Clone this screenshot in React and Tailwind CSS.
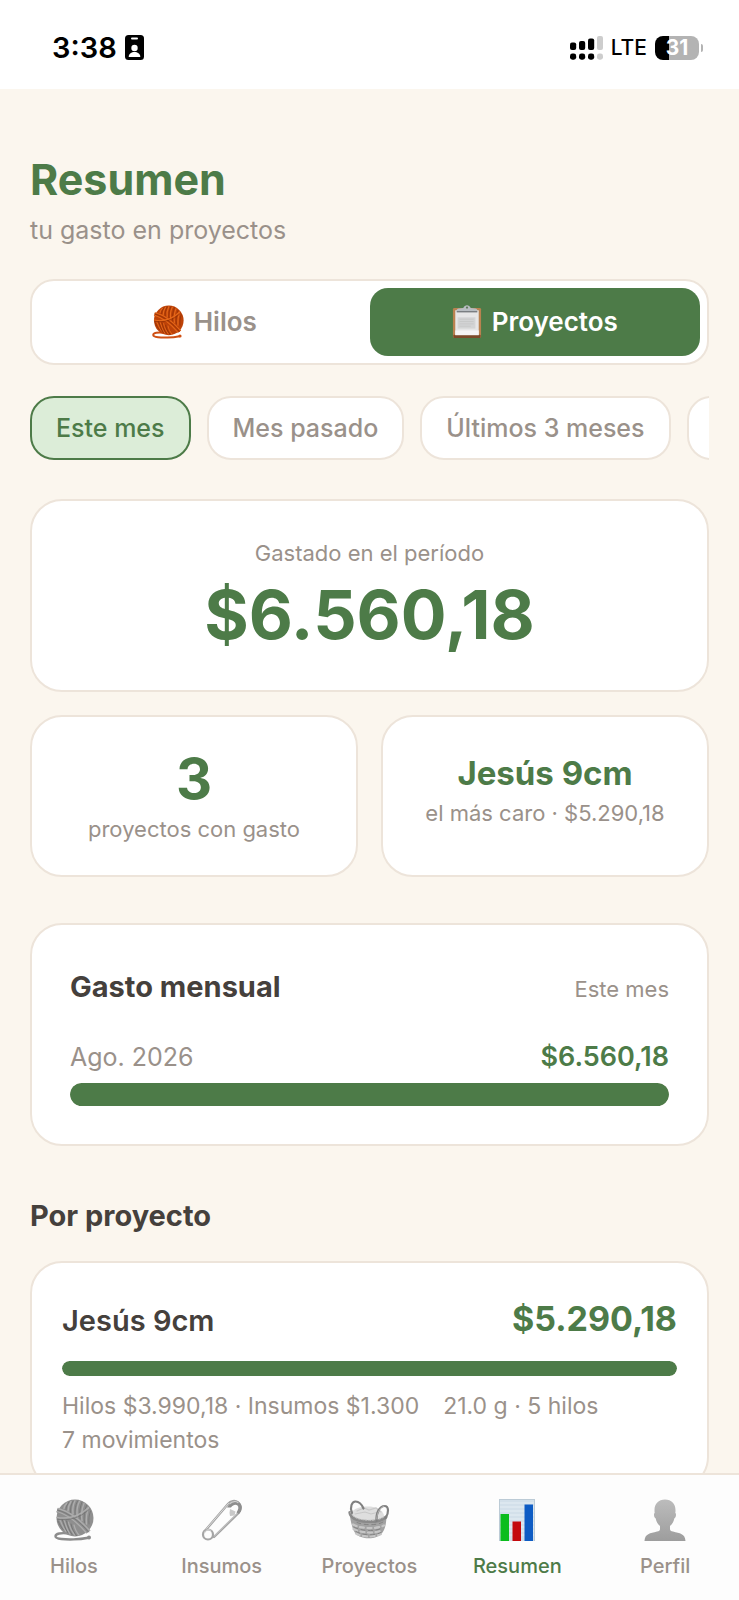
import { useState } from "react";
import clsx from "clsx";

const periods = ["Este mes", "Mes pasado", "Últimos 3 meses", "Este año"];

const months = [{ label: "Ago. 2026", amount: "$6.560,18", share: 100 }];

const projects = [
  {
    name: "Jesús 9cm",
    amount: "$5.290,18",
    share: 100,
    details: ["Hilos $3.990,18 · Insumos $1.300", "21.0 g · 5 hilos", "7 movimientos"],
  },
];

const card = "rounded-[32px] border-2 border-[#ede4da] bg-white";
const caption = "text-[22px] leading-9 text-[#9a918a]";

function YarnIcon({ grey, className }) {
  const base = grey ? "#8f8f8f" : "#bd4208";
  const light = grey ? "#adadad" : "#e5681a";
  const dark = grey ? "#737373" : "#8a2c05";
  const tail = grey ? "#8c8c8c" : "#cf4f12";
  return (
    <svg viewBox="0 0 40 42" className={className} fill="none" strokeLinecap="round" aria-hidden="true">
      <path d="M15 34.500C7 33.500 1.500 34.500 1.500 37.200c0 3 10 3.400 18 3.200 6-.1 10-.6 15-1.600" stroke={tail} strokeWidth="2.400" />
      <circle cx="35" cy="38.500" r="2" fill={tail} />
      <circle cx="21" cy="19" r="18.500" fill={base} />
      <path d="M13 4c-2 2-3 4-3 5.500M17 2.500c-2 3-3 7-3 9.500M21 1.800c-2 4-2.500 9-2 13M25.500 2.200c-2 4-3 11-2 16M30 4.500c-2 5-3 11-2 17M34.500 9c-2 5-2.500 10-2 16" stroke={light} strokeWidth="1.400" />
      <path d="M15 3c-2 3-3 5-3 7.500M19 2c-2 4-3 8-2.500 11.500M23.500 2c-2 4-3 9-2.300 15M28 3c-2 5-3 11-2 17M32.500 6.500c-2 5-3 11-2 17M36.500 12c-1.500 4-2 8-1.500 13" stroke={dark} strokeWidth=".8" />
      <path d="M6 21c2 4 3 8 6 11.500M10 21c2 5 3 10 6 14M14.500 23c1 5 3 9 6 13M20 26c1 4 2 7 5 10" stroke={light} strokeWidth="1.200" />
      <path d="M4 22c2 4 3 6 5 8.500M8 20c2 5 3 10 6 14M12.500 22c1 5 3 10 5.500 13.500M17 25c1 5 3 8 5.500 11.500" stroke={dark} strokeWidth=".9" />
      <path d="M3.500 9.500c10 2.500 23 11 33 22l-4 3C24 25 12 17 2.500 13.500z" fill={base} />
      <path d="M4 9.500c10 2.500 22 11 31.500 22M3 12.500C13 15.500 24 24 32 33.500" stroke={light} strokeWidth="1.300" />
      <path d="M3.500 11c10 2.500 22 11 31 22" stroke={dark} strokeWidth=".8" />
      <path d="M3 18.500c11 2 23-1.500 31.500-10" stroke={light} strokeWidth="1.500" />
      <path d="M3.200 20.200c11 2 23-1.200 32-9.800" stroke={dark} strokeWidth=".8" />
    </svg>
  );
}

function ClipboardIcon({ className }) {
  return (
    <svg viewBox="0 0 32 36" className={className} aria-hidden="true">
      <rect x="1" y="3" width="30" height="32" rx="1.500" fill="#b98250" />
      <rect x="1.500" y="31.500" width="29" height="3.500" rx="1" fill="#7c4a29" />
      <rect x="3.500" y="5.500" width="25" height="26.500" fill="#e6e6e7" />
      <path d="M3.500 27h25v5h-25z" fill="#f5f5f5" />
      <path d="M6 13h19v12H6z" fill="#d3d4d5" />
      <path d="M8 15h15M8 17.500h15M8 20h15M8 22.500h12" stroke="#c6c7c8" strokeWidth="1" />
      <path d="M5 7V5.500c0-1 1-1.700 2-1.900l5-.6C13 1 14.400 0 16 0s3 1 4 3l5 .6c1 .2 2 .9 2 1.900V7z" fill="#b8bdc2" />
      <path d="M5 6.500h22v1.200H5z" fill="#666a6e" />
      <circle cx="16" cy="2.600" r="1.200" fill="#5e7a5a" />
    </svg>
  );
}

function PinIcon({ className }) {
  return (
    <svg viewBox="0 0 42 42" className={className} fill="none" strokeLinecap="round" strokeLinejoin="round" aria-hidden="true">
      <path d="M3 33 27 5c2.500-3 7-4 10-1.500s3.200 7 .5 10.500L13 38" stroke="#a3a3a3" strokeWidth="2.400" />
      <path d="M3.300 32.300 27.500 4.500" stroke="#dcdcdc" strokeWidth="1" />
      <path d="M13.500 37 37 13.500" stroke="#d5d5d5" strokeWidth=".9" />
      <circle cx="7" cy="35.500" r="5" stroke="#a5a5a5" strokeWidth="2.200" />
      <path d="M3.500 33.500c1-2.500 4-4 6.500-2" stroke="#dedede" strokeWidth=".9" />
      <path d="M26 8.500C29 2.500 35 .5 38.500 3.500s3 8-.5 11.500l-2.500-1.500c2-3 2.500-5.500 1-7s-4.500-1-6.500 2z" fill="#8e8e8e" />
      <path d="M29 4.500c2.500-2.300 6-2.600 8-1" stroke="#cfcfcf" strokeWidth="1.200" />
      <path d="m29 10 5.500 2.500-1 4-4.500.5-.5-3z" fill="#c9c9c9" />
    </svg>
  );
}

function BasketIcon({ className }) {
  return (
    <svg viewBox="0 0 42 40" className={className} fill="none" strokeLinecap="round" aria-hidden="true">
      <path d="M1.500 13C7 20 29 25 38.500 17c-.5 8-1.500 12-4 15.500-4 7-21 8-27 1C4.500 30 2.500 21 1.500 13z" fill="#a2a2a2" />
      <path d="M3 13c3-5 10-6.500 17-6.500 7 0 14 2.500 16 8.500 0 7-31 8-33-2z" fill="#dedede" />
      <path d="m9 11 7-3 5 2 7-2 5 4M7 14l10-2 6 2 8-2" stroke="#c8c8c8" strokeWidth="1.200" />
      <path d="M1.800 12.500c1 6.500 9 8.500 17.200 9 8 .4 15-1 19-4.500" stroke="#8a8a8a" strokeWidth="3" />
      <path d="M2.500 12c2 6 9 7.700 17 8.200 8 .4 14-1 17.500-4.200" stroke="#c6c6c6" strokeWidth="1" strokeDasharray="2 1.500" />
      <path d="M5 24.500c6 4 23 5 31 1M5.500 29c7 4 22 5 29 1M8 33.500c6 3.500 18 4 25 .5" stroke="#c6c6c6" strokeWidth="2.200" strokeDasharray="4 3.500" />
      <path d="M9 22.500c6 2.500 19 3.500 26-.5M6 27c7 4 21 5 28 1M8 31.500c7 4 18 4.500 25 1" stroke="#838383" strokeWidth="1" strokeDasharray="4 3.500" />
      <path d="M4 13C1.500 7 4 1.500 7.500 1.500c4 0 6.500 3.500 8 7" stroke="#808080" strokeWidth="2.200" />
      <path d="M28.500 21C28 12 32 6 36.500 6c4.500 0 4.500 7 1 12" stroke="#808080" strokeWidth="2.200" />
      <path d="M28.700 19C29 12 32.500 7 36 6.200" stroke="#bcbcbc" strokeWidth=".8" />
    </svg>
  );
}

function ChartIcon({ className }) {
  return (
    <svg viewBox="0 0 36 42" className={className} aria-hidden="true">
      <path d="M0 0h36v42H0z" fill="#d3e0ea" />
      <path d="M0 4h36M0 8h36M0 12h36M0 16h36M0 20h36M0 24h36M0 28h36M0 32h36M0 36h36" stroke="#dfe9f1" strokeWidth="1.500" />
      <path d="M.5 0v42M35.500 0v42M0 .5h36" stroke="#bccbd6" strokeWidth="1" />
      <path d="M1.500 15h8.500v27H1.500z" fill="#0bbd1d" />
      <path d="M13.500 22.500H22V42h-8.500z" fill="#c40a0e" />
      <path d="M25.500 5.500H34V42h-8.500z" fill="#0e5cc4" />
    </svg>
  );
}

function PersonIcon({ className }) {
  return (
    <svg viewBox="0 0 42 42" className={className} aria-hidden="true">
      <defs>
        <linearGradient id="person" x1="0" y1="0" x2="0" y2="1">
          <stop offset="0" stopColor="#bcbcbc" />
          <stop offset="1" stopColor="#9d9d9d" />
        </linearGradient>
      </defs>
      <path d="M21 .5c6.500 0 10.500 4.500 10.500 10.500 0 1 0 2-.2 3 1.200.4.900 4.500-1 5.500-.6 3-2 5.500-4.300 7.500v3c0 1.500 1 2 3 2.600 7 1.900 12 2 12.500 9.400H.5c.5-7.400 5.500-7.500 12.500-9.400 2-.6 3-1.100 3-2.600v-3c-2.300-2-3.700-4.500-4.300-7.500-1.900-1-2.200-5.100-1-5.500-.2-1-.2-2-.2-3C10.500 5 14.500.5 21 .5z" fill="url(#person)" />
    </svg>
  );
}

const tabs = [
  { label: "Hilos", icon: <YarnIcon grey className="h-[42px] w-10" /> },
  { label: "Insumos", icon: <PinIcon className="h-[42px] w-[42px]" /> },
  { label: "Proyectos", icon: <BasketIcon className="h-10 w-[42px]" /> },
  { label: "Resumen", icon: <ChartIcon className="h-[42px] w-9" /> },
  { label: "Perfil", icon: <PersonIcon className="h-[42px] w-[42px]" /> },
];

function StatusBar() {
  return (
    <div className="flex h-[89px] shrink-0 items-center justify-between bg-white pt-1.5 pr-9 pl-13 text-black">
      <div className="flex items-center gap-2">
        <span className="text-[29px] leading-9 font-semibold">3:38</span>
        <svg viewBox="0 0 19 25" className="h-[25px] w-[19px]" aria-hidden="true">
          <rect width="19" height="25" rx="3.500" />
          <rect x="6" y="2.500" width="7" height="2" rx="1" fill="#fff" />
          <circle cx="9.500" cy="13" r="3.200" fill="#fff" />
          <path d="M3.700 22c0-3.300 2.800-5 5.800-5s5.800 1.700 5.800 5z" fill="#fff" />
        </svg>
      </div>
      <div className="flex items-center gap-2">
        <svg viewBox="0 0 33 24" className="h-6 w-[33px]" aria-hidden="true">
          <rect x="0" y="6.500" width="6.200" height="7.500" rx="2" />
          <rect x="9" y="5" width="6.200" height="9" rx="2" />
          <rect x="18" y="2.500" width="6.200" height="11.500" rx="2" />
          <rect x="27" y="0" width="6" height="14" rx="2" fill="#cdcdcd" />
          <rect x="0" y="17.500" width="6.200" height="6.200" rx="2.400" />
          <rect x="9" y="17.500" width="6.200" height="6.200" rx="2.400" />
          <rect x="18" y="17.500" width="6.200" height="6.200" rx="2.400" />
          <rect x="27" y="17.500" width="6" height="6.200" rx="2.400" fill="#cdcdcd" />
        </svg>
        <span className="text-[21px] leading-8 font-medium">LTE</span>
        <div className="flex items-center gap-0.5">
          <div className="flex h-6 w-11 items-center justify-center rounded-lg bg-linear-to-r from-black from-31% to-[#b3b3b3] to-31% text-[21px] leading-6 font-bold text-white">
            31
          </div>
          <div className="h-2 w-0.5 rounded-r-full bg-[#b3b3b3]" />
        </div>
      </div>
    </div>
  );
}

function Bar({ share, className }) {
  return (
    <div className="overflow-hidden rounded-full bg-[#f1ebe3]">
      <div className={clsx("rounded-full bg-[#4d7b48]", className)} style={{ width: `${share}%` }} />
    </div>
  );
}

export default function App() {
  const [view, setView] = useState("Proyectos");
  const [period, setPeriod] = useState("Este mes");

  const viewButton = (active) =>
    clsx(
      "flex h-[68px] flex-1 items-center justify-center gap-2.5 rounded-[18px] text-[26px] leading-9 font-semibold",
      active ? "bg-[#4d7b48] text-white" : "text-[#9a918a]"
    );

  return (
    <div className="flex h-screen flex-col bg-[#fbf6ee] font-['Inter',sans-serif] text-[#45403c]">
      <StatusBar />

      <main className="min-h-0 flex-1 overflow-y-auto px-[30px] pt-[63px] pb-8 [scrollbar-width:none]">
        <h1 className="text-[43px] leading-[54px] font-bold text-[#4d7b48]">Resumen</h1>
        <p className="mt-1 text-[25px] leading-10 text-[#9a918a]">tu gasto en proyectos</p>

        <div className="mt-[29px] flex rounded-3xl border-2 border-[#ede4da] bg-white p-[7px]">
          <button className={viewButton(view === "Hilos")} onClick={() => setView("Hilos")}>
            <YarnIcon className="h-[34px] w-8" />
            Hilos
          </button>
          <button className={viewButton(view === "Proyectos")} onClick={() => setView("Proyectos")}>
            <ClipboardIcon className="h-[34px] w-[30px]" />
            Proyectos
          </button>
        </div>

        <div className="mt-[31px] flex gap-4 overflow-x-auto [scrollbar-width:none]">
          {periods.map((item) => (
            <button
              key={item}
              className={clsx(
                "h-16 shrink-0 rounded-3xl border-2 px-6 text-[25px] leading-9 font-medium",
                item === period
                  ? "border-[#4d7b48] bg-[#dcedd8] text-[#4d7b48]"
                  : "border-[#ede4da] bg-white text-[#9a918a]"
              )}
              onClick={() => setPeriod(item)}
            >
              {item}
            </button>
          ))}
        </div>

        <section className={clsx(card, "mt-[39px] pt-[34px] pb-8 text-center")}>
          <p className={caption}>Gastado en el período</p>
          <p className="text-[68px] leading-[87px] font-bold text-[#4d7b48]">$6.560,18</p>
        </section>

        <div className="mt-[23px] grid grid-cols-2 gap-[23px] text-center">
          <section className={clsx(card, "pt-[34px] pb-7")}>
            <p className="text-[56px] leading-[56px] font-bold text-[#4d7b48]">3</p>
            <p className={clsx(caption, "mt-1")}>proyectos con gasto</p>
          </section>
          <section className={clsx(card, "pt-[34px] pb-7")}>
            <p className="text-[33px] leading-11 font-bold text-[#4d7b48]">Jesús 9cm</p>
            <p className={caption}>el más caro · $5.290,18</p>
          </section>
        </div>

        <section className={clsx(card, "mt-[46px] p-[38px]")}>
          <div className="flex items-baseline justify-between">
            <h2 className="text-[29px] leading-[48px] font-bold">Gasto mensual</h2>
            <span className={caption}>{period}</span>
          </div>
          {months.map((month) => (
            <div key={month.label} className="mt-7">
              <div className="mb-2 flex items-baseline justify-between leading-9">
                <span className="text-[25px] text-[#9a918a]">{month.label}</span>
                <span className="text-[27px] font-semibold text-[#4d7b48]">{month.amount}</span>
              </div>
              <Bar share={month.share} className="h-[23px]" />
            </div>
          ))}
        </section>

        <h2 className="mt-[46px] text-[29px] leading-[48px] font-bold">Por proyecto</h2>
        {projects.map((project) => (
          <section key={project.name} className={clsx(card, "mt-[21px] p-[30px]")}>
            <div className="mb-3.5 flex items-baseline justify-between leading-[52px]">
              <h3 className="text-[29px] font-semibold">{project.name}</h3>
              <span className="text-[34px] font-bold text-[#4d7b48]">{project.amount}</span>
            </div>
            <Bar share={project.share} className="h-[15px]" />
            <div className="mt-[13px] flex flex-wrap gap-x-6 text-[23px] leading-[34px] text-[#9a918a]">
              {project.details.map((detail) => (
                <span key={detail}>{detail}</span>
              ))}
            </div>
          </section>
        ))}
      </main>

      <nav className="grid h-[127px] shrink-0 grid-cols-5 border-t-2 border-[#ede4da] bg-[#fdfdfd]">
        {tabs.map((tab) => (
          <a
            key={tab.label}
            href={`#${tab.label.toLowerCase()}`}
            className={clsx(
              "flex flex-col items-center pt-6 text-[20px] leading-7 font-medium",
              tab.label === "Resumen" ? "text-[#4d7b48]" : "text-[#9a918a]"
            )}
          >
            <span className="mb-[11px] flex h-[42px] items-center">{tab.icon}</span>
            {tab.label}
          </a>
        ))}
      </nav>
    </div>
  );
}
